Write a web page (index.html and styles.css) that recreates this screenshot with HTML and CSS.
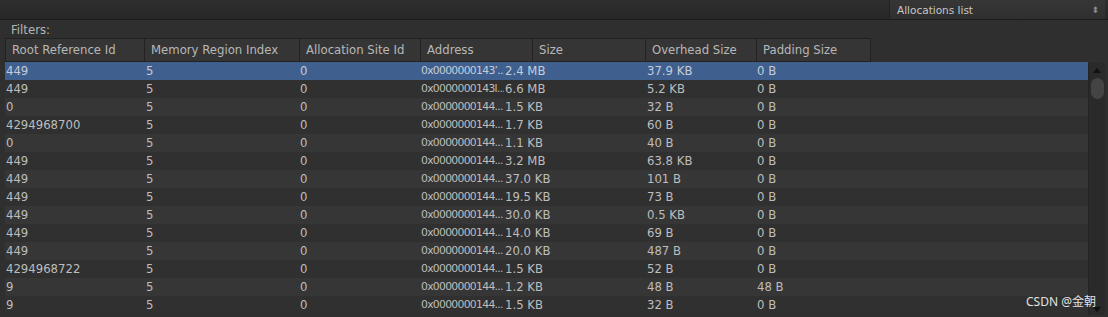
FILE: index.html
```html
<!DOCTYPE html>
<html lang="en">
<head>
    <meta charset="UTF-8">
    <title>Allocations list</title>
    <link rel="stylesheet" href="styles.css">
</head>
<body>
    <div class="toolbar">
        <div class="toolbar-space"></div>
        <div class="dropdown">
            <span>Allocations list</span>
            <span class="dropdown-arrows">&#x2B0D;</span>
        </div>
    </div>

    <div class="panel">
        <div class="filters">Filters:</div>
        <div class="header">
            <div class="hcell w1">Root Reference Id</div>
            <div class="hcell w2">Memory Region Index</div>
            <div class="hcell w3">Allocation Site Id</div>
            <div class="hcell w4">Address</div>
            <div class="hcell w5">Size</div>
            <div class="hcell w6">Overhead Size</div>
            <div class="hcell w7">Padding Size</div>
        </div>

        <div class="body">
            <div class="rows" id="rows"></div>
            <div class="scrollbar">
                <div class="arrow up"></div>
                <div class="thumb"></div>
                <div class="track"></div>
                <div class="arrow down"></div>
            </div>
        </div>
    </div>

    <div class="watermark">CSDN @金朝</div>

    <script>
        const data = [
            ['449', '5', '0', '0x0000000143\u2019...', '2.4 MB', '37.9 KB', '0 B'],
            ['449', '5', '0', '0x0000000143l...', '6.6 MB', '5.2 KB', '0 B'],
            ['0', '5', '0', '0x0000000144...', '1.5 KB', '32 B', '0 B'],
            ['4294968700', '5', '0', '0x0000000144...', '1.7 KB', '60 B', '0 B'],
            ['0', '5', '0', '0x0000000144...', '1.1 KB', '40 B', '0 B'],
            ['449', '5', '0', '0x0000000144...', '3.2 MB', '63.8 KB', '0 B'],
            ['449', '5', '0', '0x0000000144...', '37.0 KB', '101 B', '0 B'],
            ['449', '5', '0', '0x0000000144...', '19.5 KB', '73 B', '0 B'],
            ['449', '5', '0', '0x0000000144...', '30.0 KB', '0.5 KB', '0 B'],
            ['449', '5', '0', '0x0000000144...', '14.0 KB', '69 B', '0 B'],
            ['449', '5', '0', '0x0000000144...', '20.0 KB', '487 B', '0 B'],
            ['4294968722', '5', '0', '0x0000000144...', '1.5 KB', '52 B', '0 B'],
            ['9', '5', '0', '0x0000000144...', '1.2 KB', '48 B', '48 B'],
            ['9', '5', '0', '0x0000000144...', '1.5 KB', '32 B', '0 B']
        ];

        const rows = document.getElementById('rows');
        data.forEach((values, i) => {
            const row = document.createElement('div');
            row.className = 'row' + (i === 0 ? ' selected' : '') + (i % 2 ? ' odd' : '');
            values.forEach((v, col) => {
                const cell = document.createElement('div');
                cell.className = col === 3 ? 'cell address' : 'cell';
                cell.textContent = v;
                row.appendChild(cell);
            });
            rows.appendChild(row);
        });
    </script>
</body>
</html>
```

FILE: styles.css
```css
html, body {
    margin: 0;
    padding: 0;
    height: 100%;
    overflow: hidden;
}
body {
    font-family: 'DejaVu Sans', sans-serif;
    font-size: 11.7px;
    background: #2f2f2f;
    color: #bdbdbd;
    position: relative;
}
.toolbar {
    display: flex;
    height: 19px;
    background: linear-gradient(#2e2e2e, #282828);
    border-bottom: 1px solid #1c1c1c;
    padding-right: 3px;
}
.toolbar-space {
    flex: 1;
}
.dropdown {
    width: 216px;
    display: flex;
    align-items: center;
    justify-content: space-between;
    padding: 0 6px 0 7px;
    box-sizing: border-box;
    background: linear-gradient(#363636, #2f2f2f);
    border-left: 1px solid #232323;
    font-size: 10.5px;
    color: #c6c6c6;
}
.dropdown-arrows {
    font-size: 9px;
    color: #8a8a8a;
}
.panel {
    padding-left: 5px;
    padding-right: 3px;
}
.filters {
    height: 18px;
    line-height: 20px;
    padding-left: 6px;
    color: #b5b5b5;
}
.header {
    display: flex;
    height: 24px;
}
.hcell {
    box-sizing: border-box;
    height: 24px;
    line-height: 22px;
    padding-left: 6px;
    background: #353535;
    border: 1px solid #222;
    border-left: 0;
    color: #b8b8b8;
    white-space: nowrap;
    overflow: hidden;
}
.hcell.w1 { width: 140px; border-left: 1px solid #222; }
.hcell.w2 { width: 155px; }
.hcell.w3 { width: 121px; }
.hcell.w4 { width: 112px; }
.hcell.w5 { width: 113px; }
.hcell.w6 { width: 111px; }
.hcell.w7 { width: 114px; }
.body {
    display: flex;
}
.rows {
    flex: 1;
}
.row {
    display: grid;
    grid-template-columns: 140px 154px 121px 84px 142px 110px 1fr;
    height: 18px;
    line-height: 18px;
    background: #363636;
}
.row.odd {
    background: #303030;
}
.row.selected {
    background: #3f5f8e;
    color: #c4ccd8;
}
.cell {
    padding-left: 1px;
    white-space: nowrap;
    overflow: hidden;
}
.cell.address {
    font-size: 10.8px;
    letter-spacing: -0.7px;
}
.scrollbar {
    width: 17px;
    height: 253px;
    display: flex;
    flex-direction: column;
    align-items: center;
    background: #2a2a2a;
    border-left: 1px solid #242424;
    box-sizing: border-box;
}
.arrow {
    width: 0;
    height: 0;
    border-left: 4px solid transparent;
    border-right: 4px solid transparent;
    margin: 5px 0;
}
.arrow.up {
    border-bottom: 5px solid #111;
    margin-top: 6px;
}
.arrow.down {
    border-top: 5px solid #111;
    margin-bottom: 3px;
}
.thumb {
    width: 13px;
    height: 21px;
    border-radius: 7px;
    background: #444;
}
.track {
    flex: 1;
}
.watermark {
    position: absolute;
    left: 1026px;
    top: 292px;
    font-family: 'Noto Sans', 'Noto Sans CJK SC', sans-serif;
    font-size: 12px;
    color: #e2e2e2;
}
```
